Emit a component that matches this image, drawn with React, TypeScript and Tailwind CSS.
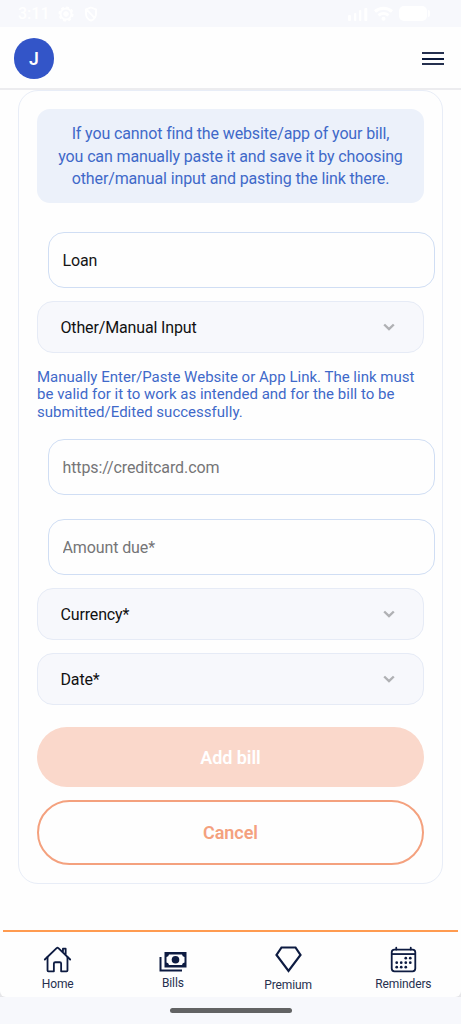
import React from "react";
import { IoCalendarOutline, IoHomeOutline } from "react-icons/io5";

function StatusBar() {
  return (
    <div className="flex h-[27px] shrink-0 items-center bg-[#f7f8fc] pl-[18px] pr-[31px] text-white">
      <span className="w-[31px] whitespace-nowrap text-[16px] font-medium leading-none">3:11</span>
      <svg className="ml-[9px] h-4 w-4" viewBox="0 0 16 16" fill="none" stroke="currentColor">
        <circle cx="8" cy="8" r="5.5" strokeWidth="2" />
        <circle cx="8" cy="8" r="6.8" strokeWidth="1.6" strokeDasharray="2.9 2.44" />
        <circle cx="8" cy="8" r="2.4" fill="currentColor" />
      </svg>
      <svg className="ml-[10px] h-4 w-[14px]" viewBox="0 0 14 16" fill="none" stroke="currentColor" strokeWidth="1.8">
        <path d="M7 1.5 12 3.4V8c0 3.2-2 5.4-5 6.6C4 13.400 2 11.200 2 8V3.400zM2.600 3.500l8.400 8.800" />
      </svg>
      <svg className="ml-auto h-[14px] w-[20px]" viewBox="0 0 20 14" fill="currentColor">
        <rect x="0" y="8" width="3" height="6" rx="1" />
        <rect x="6" y="6" width="2.300" height="8" rx="1" />
        <rect x="11" y="3" width="2.300" height="11" rx="1" />
        <rect x="16.300" y="1" width="3" height="13" rx="1" />
      </svg>
      <svg className="ml-[6px] h-[15px] w-[19px]" viewBox="0 0 19 15" fill="none" stroke="currentColor" strokeWidth="3">
        <path d="M1 5.500c5-4.400 12-4.400 17 0M4.500 9.300c3-2.500 7-2.500 10 0" />
        <circle cx="9.500" cy="12.800" r="2" fill="currentColor" stroke="none" />
      </svg>
      <div className="ml-[6px] h-[15px] w-[28px] rounded-[5px] bg-white" />
      <div className="ml-px h-[7px] w-[2px] rounded-r bg-white" />
    </div>
  );
}

function Header() {
  return (
    <header className="flex h-[63px] shrink-0 items-center justify-between border-b-2 border-[#ececef] pl-[13.500px] pr-[17px] pt-[2px]">
      <div className="flex h-[40.500px] w-[40.500px] items-center justify-center rounded-full bg-[#3355c8] text-[17.500px] font-semibold text-white">
        <span className="pt-px">J</span>
      </div>
      <button aria-label="Menu" className="flex flex-col gap-[3.500px]">
        <span className="block h-[2px] w-[22px] bg-[#25304f]" />
        <span className="block h-[2px] w-[22px] bg-[#0d1a3c]" />
        <span className="block h-[2px] w-[22px] bg-[#25304f]" />
      </button>
    </header>
  );
}

function Field({ value, placeholder, label }: { value?: string; placeholder?: string; label: string }) {
  return (
    <input
      aria-label={label}
      defaultValue={value}
      placeholder={placeholder}
      className="ml-[11px] block h-[56px] w-[387px] shrink-0 rounded-[16px] border border-[#d0def4] bg-[#fefefe] px-[13.500px] text-[16px] tracking-[-0.110px] text-[#151515] outline-none placeholder:text-[#757577]"
    />
  );
}

function SelectRow({ label }: { label: string }) {
  return (
    <button className="flex h-[52px] w-[387px] shrink-0 items-center justify-between rounded-[16px] border border-[#e6ebf6] bg-[#f7f8fc] pl-[22.500px] pr-[28px] text-left text-[16px] tracking-[-0.150px] text-[#111]">
      <span className="pt-px">{label}</span>
      <svg className="h-3 w-3" viewBox="0 0 12 12" fill="none" stroke="#b0b1b4" strokeWidth="2.400">
        <path d="m1.200 3.500 4.800 4.600 4.800-4.600" />
      </svg>
    </button>
  );
}

function NavItem({ label, offset, children }: { label: string; offset: string; children: React.ReactNode }) {
  return (
    <a className="flex flex-1 flex-col items-center text-[#0d1b41]">
      <div className="flex h-[28px] items-center justify-center">{children}</div>
      <span className={`${offset} text-[12px] leading-[14px] tracking-[-0.120px] text-[#26304f]`}>{label}</span>
    </a>
  );
}

export default function App() {
  return (
    <div className="flex h-[1024px] w-[461px] flex-col overflow-hidden bg-[#fefefe] font-['Roboto','Noto_Sans',sans-serif]">
      <StatusBar />
      <Header />
      <main className="flex flex-1 flex-col pl-[18px]">
        <section className="flex h-[794px] w-[425px] flex-col rounded-[20px] border border-[#e8edf7] pl-[18px] pt-[18px]">
          <div className="h-[94px] w-[387px] shrink-0 rounded-[13px] bg-[#ecf1fa] pt-[14px] text-center text-[16px] leading-[22.500px] tracking-[-0.130px] text-[#3f69c9]">
            <p className="whitespace-nowrap">If you cannot find the website/app of your bill,</p>
            <p className="whitespace-nowrap">you can manually paste it and save it by choosing</p>
            <p className="whitespace-nowrap">other/manual input and pasting the link there.</p>
          </div>
          <div className="mt-[29px] flex flex-col gap-[13px]">
            <Field label="Category" value="Loan" />
            <SelectRow label="Other/Manual Input" />
          </div>
          <div className="mt-[15.500px] h-[54px] text-[15px] leading-[17.500px] tracking-[0.010px] text-[#3f69c9]">
            <p className="whitespace-nowrap">Manually Enter/Paste Website or App Link. The link must</p>
            <p className="whitespace-nowrap">be valid for it to work as intended and for the bill to be</p>
            <p className="whitespace-nowrap">submitted/Edited successfully.</p>
          </div>
          <div className="mt-[16.500px] flex flex-col gap-[24px]">
            <Field label="Link" placeholder="https://creditcard.com" />
            <Field label="Amount" placeholder="Amount due*" />
          </div>
          <div className="mt-[13px] flex flex-col gap-[13px]">
            <SelectRow label="Currency*" />
            <SelectRow label="Date*" />
          </div>
          <div className="mt-[22px] flex w-[387px] flex-col gap-[13px]">
            <button className="h-[60px] rounded-full bg-[#fad8cb] text-[18px] font-semibold tracking-[-0.050px] text-white">Add bill</button>
            <button className="h-[65px] rounded-full border-2 border-[#f4a17e] text-[18px] font-semibold tracking-[-0.050px] text-[#f4a17e]">Cancel</button>
          </div>
        </section>
      </main>
      <div className="h-[67px] shrink-0 bg-[linear-gradient(to_bottom,#fefefe_30%,#e5e5e8)]">
        <nav className="flex h-[67px] flex-col rounded-[6px] bg-[#fefefe]">
          <div className="mx-[3px] h-[1.500px] shrink-0 bg-[#ff9b50]" />
          <div className="flex pt-[14.500px]">
            <NavItem label="Home" offset="mt-[3px]"><IoHomeOutline size={29} strokeWidth={8} className="mb-[2px]" /></NavItem>
            <NavItem label="Bills" offset="mt-[2px]">
              <svg className="mt-[4px] h-[20px] w-[28px]" viewBox="0 0 28 20" fill="none">
                <path d="M1.500 5v13.500H23" stroke="currentColor" strokeWidth="2" />
                <path d="M5.500 0h22v15.500h-22z" fill="currentColor" />
                <path d="M10 2.500h13a3 3 0 0 0 2.500 2.500v5.500A3 3 0 0 0 23 13H10a3 3 0 0 0-2.500-2.500V5A3 3 0 0 0 10 2.500z" fill="#fefefe" />
                <circle cx="16.500" cy="7.800" r="3.800" fill="currentColor" />
              </svg>
            </NavItem>
            <NavItem label="Premium" offset="mt-[4px]">
              <svg className="mb-px h-[27px] w-[27px]" viewBox="0 0 27 27" fill="none" stroke="currentColor" strokeWidth="2.200">
                <path d="M6.500 1.500h14l5 7.500-12 16L1.500 9z" />
              </svg>
            </NavItem>
            <NavItem label="Reminders" offset="mt-[3px]"><IoCalendarOutline size={29} className="mb-[2px]" /></NavItem>
          </div>
        </nav>
      </div>
      <div className="flex h-[27px] shrink-0 items-center justify-center bg-[#f7f8fc]">
        <div className="h-[5px] w-[122px] rounded-full bg-[#626364]" />
      </div>
    </div>
  );
}
